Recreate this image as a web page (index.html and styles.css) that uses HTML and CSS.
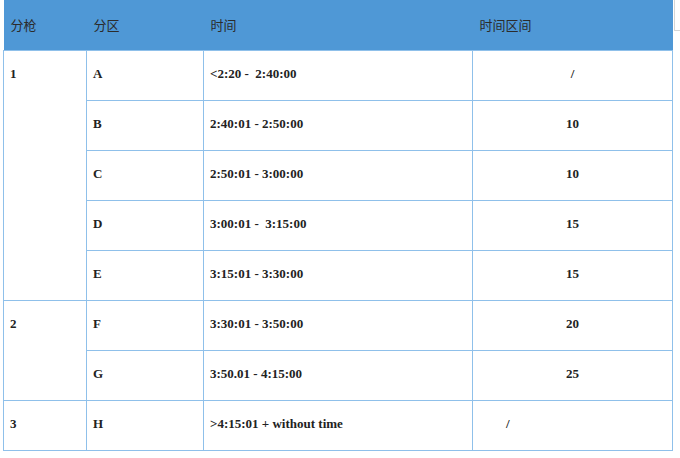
FILE: index.html
```html
<!DOCTYPE html>
<html lang="zh">
<head>
<meta charset="utf-8">
<link rel="stylesheet" href="styles.css">
</head>
<body>
<div class="corner"></div>
<table class="grid">
  <colgroup>
    <col class="c1"><col class="c2"><col class="c3"><col class="c4">
  </colgroup>
  <thead>
    <tr><th>分枪</th><th>分区</th><th>时间</th><th>时间区间</th></tr>
  </thead>
  <tbody>
    <tr><td rowspan="5">1</td><td>A</td><td>&lt;2:20 -&nbsp; 2:40:00</td><td class="num">/</td></tr>
    <tr><td>B</td><td>2:40:01 - 2:50:00</td><td class="num">10</td></tr>
    <tr><td>C</td><td>2:50:01 - 3:00:00</td><td class="num">10</td></tr>
    <tr><td>D</td><td>3:00:01 -&nbsp; 3:15:00</td><td class="num">15</td></tr>
    <tr><td>E</td><td>3:15:01 - 3:30:00</td><td class="num">15</td></tr>
    <tr><td rowspan="2">2</td><td>F</td><td>3:30:01 - 3:50:00</td><td class="num">20</td></tr>
    <tr><td>G</td><td>3:50.01 - 4:15:00</td><td class="num">25</td></tr>
    <tr><td>3</td><td>H</td><td>&gt;4:15:01 + without time</td><td class="off">/</td></tr>
  </tbody>
</table>
</body>
</html>
```
FILE: styles.css
```css
html, body {
  margin: 0;
  padding: 0;
  background: #fff;
}
body {
  padding-left: 3px;
  position: relative;
}
.corner {
  position: absolute;
  left: 674px;
  top: 0;
  width: 10px;
  height: 30px;
  border-left: 1px solid #d6d6d6;
  border-bottom: 1px solid #d6d6d6;
}
.grid {
  border-collapse: collapse;
  table-layout: fixed;
  width: 669px;
  color: #222;
}
.c1 { width: 83px; }
.c2 { width: 117px; }
.c3 { width: 269px; }
.c4 { width: 200px; }
.grid th {
  background: #4f98d6;
  height: 49px;
  padding: 0 7px 1px 7px;
  text-align: left;
  font-family: "Noto Sans CJK SC", "Noto Sans", sans-serif;
  font-weight: normal;
  font-size: 13px;
  color: #2b2b2b;
  border: none;
}
.grid td {
  border: 1px solid #8fc0ea;
  padding: 15px 6px 18px 6px;
  height: 16px;
  line-height: 16px;
  vertical-align: top;
  font-family: "Liberation Serif", "Times New Roman", serif;
  font-weight: bold;
  font-size: 13px;
  white-space: nowrap;
}
.grid td.num {
  text-align: center;
}
.grid td.off {
  padding-left: 33px;
}
```
